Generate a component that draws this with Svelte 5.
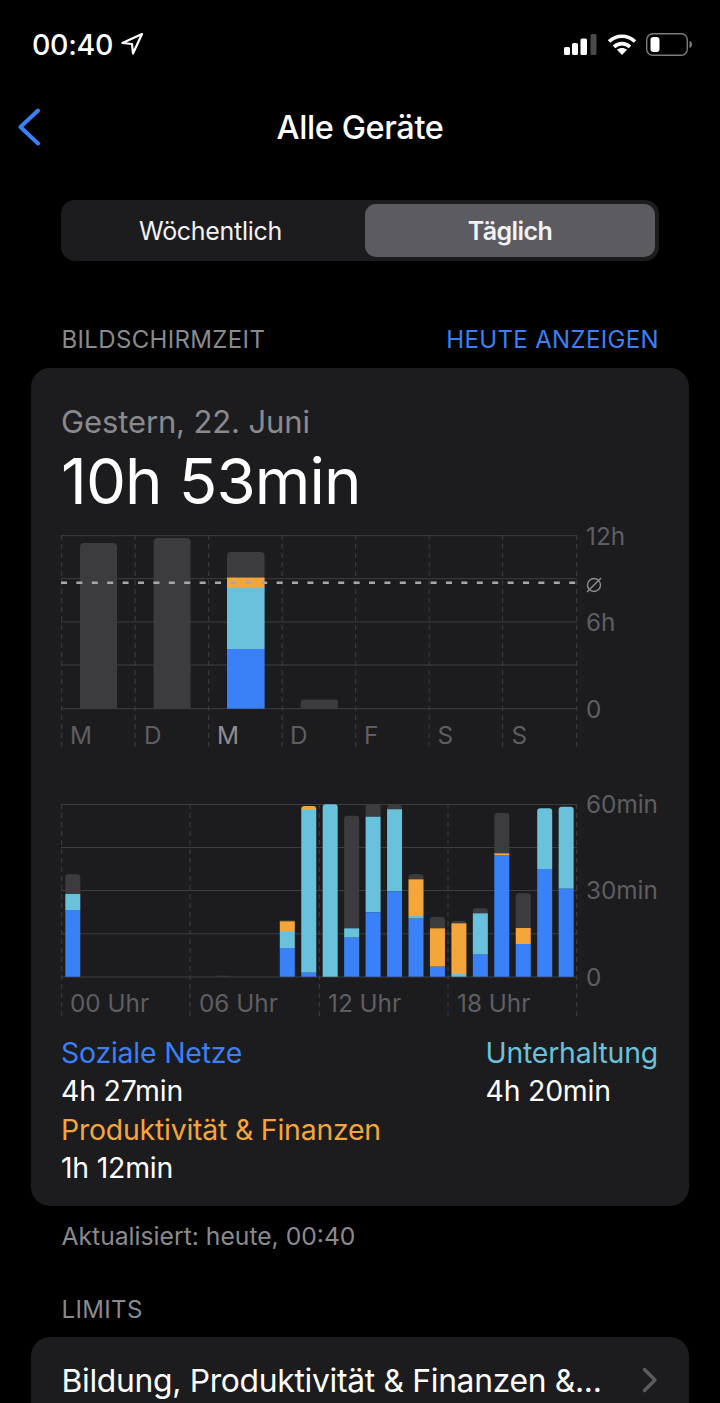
<script>
    const blue = '#3a80f6';
    const cyan = '#6ac1dc';
    const orange = '#f5a63b';
    const gray = '#3c3c3e';

    // grid of the weekly chart, chart coords start at x=61 page, y=535 page
    const weekV = [0.7, 74.2, 147.7, 221.2, 294.7, 368.2, 441.7, 515.7];
    const weekH = [0.7, 43.7, 87, 130, 173.7];
    const weekLabels = [
        { t: 'M', x: 9 },
        { t: 'D', x: 83 },
        { t: 'M', x: 156, on: true },
        { t: 'D', x: 229 },
        { t: 'F', x: 303 },
        { t: 'S', x: 376.5 },
        { t: 'S', x: 450.5 }
    ];
    const weekAxis = [
        { t: '12h', y: 1 },
        { t: '6h', y: 87 },
        { t: '0', y: 174 }
    ];

    const dayV = [0.7, 129, 258.3, 387, 515.7];
    const dayH = [0.5, 43.5, 86.5, 129.8, 173];
    const dayLabels = [
        { t: '00 Uhr', x: 9 },
        { t: '06 Uhr', x: 138 },
        { t: '12 Uhr', x: 267 },
        { t: '18 Uhr', x: 396 }
    ];
    const dayAxis = [
        { t: '60min', y: 0 },
        { t: '30min', y: 86 },
        { t: '0', y: 173 }
    ];

    // each bar: hour, then [colour, top y on the page], top segment first
    const dayBars = [
        [0, [gray, 874.3], [cyan, 894], [blue, 910]],
        [7, [gray, 975.7]],
        [10, [gray, 920.3], [orange, 921.3], [cyan, 932], [blue, 948]],
        [11, [orange, 806], [cyan, 810], [blue, 972.7]],
        [12, [cyan, 804.3]],
        [13, [gray, 815.7], [cyan, 928.3], [blue, 937.7]],
        [14, [gray, 804], [cyan, 816.7], [blue, 912.3]],
        [15, [gray, 805], [cyan, 809.3], [blue, 891.3]],
        [16, [gray, 874.3], [orange, 879.3], [cyan, 916], [blue, 918.7]],
        [17, [gray, 917], [orange, 928.3], [blue, 966.7]],
        [18, [gray, 921], [orange, 923.3], [cyan, 974]],
        [19, [gray, 908.3], [cyan, 913.3], [blue, 954.7]],
        [20, [gray, 813], [orange, 853.3], [blue, 855]],
        [21, [gray, 893.3], [orange, 928], [blue, 944]],
        [22, [cyan, 808.3], [blue, 869]],
        [23, [cyan, 806.7], [blue, 888.7]]
    ];

    const dayBottom = 976.7;
    const dayTop = 804;
    const barWidth = 15;

    function barX(hour) {
        return 4.3 + 21.45 * hour;
    }

    // square segment, but the topmost one gets rounded upper corners
    function segPath(x, y, h, first) {
        const r = first ? Math.min(3, h) : 0;
        const w = barWidth;
        return `M${x} ${y + h}V${y + r}a${r} ${r} 0 0 1 ${r} ${-r}H${x + w - r}a${r} ${r} 0 0 1 ${r} ${r}V${y + h}z`;
    }

    function segs(bar) {
        const list = bar.slice(1);
        const x = barX(bar[0]);
        return list.map((s, i) => {
            const end = i + 1 < list.length ? list[i + 1][1] : dayBottom;
            return { fill: s[0], d: segPath(x, s[1] - dayTop, end - s[1], i === 0) };
        });
    }
</script>

<main class="page">
    <header class="status">
        <div class="time">
            <span>00:40</span>
            <svg width="24" height="24" viewBox="0 0 24 24">
                <path d="M22 2 2.500 11l9.500 1 1 9.500z" fill="none" stroke="#fff" stroke-width="2.2" stroke-linejoin="round" />
            </svg>
        </div>
        <div class="status-icons">
            <svg class="signal" width="33" height="21" viewBox="0 0 33 21">
                <rect x="0" y="13" width="6" height="8" rx="1.5" fill="#fff" />
                <rect x="8" y="9" width="6" height="12" rx="1.5" fill="#fff" />
                <rect x="16.5" y="4.5" width="6.5" height="16.5" rx="1.5" fill="#fff" />
                <rect x="26.5" y="0" width="6" height="21" rx="1.5" fill="#4a4a4c" />
            </svg>
            <svg class="wifi" width="30" height="21" viewBox="0 0 30 21">
                <path d="M2 7.5C9.5.5 20.5.5 28 7.5" fill="none" stroke="#fff" stroke-width="3.6" />
                <path d="M7 12.8c4.8-4.3 11.2-4.3 16 0" fill="none" stroke="#fff" stroke-width="3.6" />
                <path d="M15 21l-5-5.2c2.9-2.4 7.1-2.4 10 0z" fill="#fff" />
            </svg>
            <svg class="battery" width="46" height="23" viewBox="0 0 46 23">
                <rect x="0.7" y="0.7" width="40.6" height="21.6" rx="6" fill="none" stroke="#7b7b7d" stroke-width="1.4" />
                <rect x="4.5" y="4" width="9" height="15" rx="3" fill="#fff" />
                <path d="M43.5 8c1.7.5 2.500 1.800 2.500 3.500s-.8 3-2.500 3.500z" fill="#7b7b7d" />
            </svg>
        </div>
    </header>

    <nav class="navbar">
        <svg class="back" width="24" height="38" viewBox="0 0 24 38">
            <path d="M21 2.5 3.5 19 21 35.5" fill="none" stroke="#3a80f6" stroke-width="4" stroke-linecap="round" stroke-linejoin="round" />
        </svg>
        <h1>Alle Geräte</h1>
    </nav>

    <div class="segmented">
        <div class="seg first">Wöchentlich</div>
        <div class="seg active">Täglich</div>
    </div>

    <div class="section-head">
        <span>BILDSCHIRMZEIT</span>
        <span class="link">HEUTE ANZEIGEN</span>
    </div>

    <section class="card">
        <div class="date">Gestern, 22. Juni</div>
        <div class="total">10h 53min</div>

        <svg class="chart week" width="598" height="212" viewBox="0 0 598 212">
            {#each weekH as y}
                <line x1="0" x2="516" y1={y} y2={y} class="grid" />
            {/each}
            {#each weekV as x}
                <line x1={x} x2={x} y1="0" y2="212" class="grid dashed" />
            {/each}

            <path d="M19 174V12a4 4 0 0 1 4-4h29a4 4 0 0 1 4 4v162z" fill={gray} />
            <path d="M92.6 174V7a4 4 0 0 1 4-4h29a4 4 0 0 1 4 4v167z" fill={gray} />
            <path d="M166 42.5V21a4 4 0 0 1 4-4h29.6a4 4 0 0 1 4 4v21.5z" fill={gray} />
            <rect x="166" y="42.5" width="37.6" height="10.5" fill={orange} />
            <rect x="166" y="53" width="37.6" height="61" fill={cyan} />
            <rect x="166" y="114" width="37.6" height="59.7" fill={blue} />
            <path d="M239.6 174v-6.5a3 3 0 0 1 3-3h31.4a3 3 0 0 1 3 3v6.5z" fill={gray} />

            <line x1="0" x2="516" y1="47.7" y2="47.7" class="avg" />

            {#each weekLabels as l}
                <text x={l.x} y="209" class="tick" class:on={l.on}>{l.t}</text>
            {/each}
            {#each weekAxis as a}
                <text x="525" y={a.y + 9} class="tick">{a.t}</text>
            {/each}
            <g fill="none" stroke="#8e8e90" stroke-width="1.4">
                <circle cx="533" cy="50" r="6.5" />
                <line x1="526" y1="57" x2="540" y2="43" />
            </g>
        </svg>

        <svg class="chart day" width="598" height="212" viewBox="0 0 598 212">
            {#each dayH as y}
                <line x1="0" x2="516" y1={y} y2={y} class="grid" />
            {/each}
            {#each dayV as x}
                <line x1={x} x2={x} y1="0" y2="212" class="grid dashed" />
            {/each}

            {#each dayBars as bar}
                <g>
                    {#each segs(bar) as s}
                        <path d={s.d} fill={s.fill} />
                    {/each}
                </g>
            {/each}

            {#each dayLabels as l}
                <text x={l.x} y="208" class="tick">{l.t}</text>
            {/each}
            {#each dayAxis as a}
                <text x="525" y={a.y + 9} class="tick">{a.t}</text>
            {/each}
        </svg>

        <div class="legend">
            <div class="legend-col">
                <div class="name soc">Soziale Netze</div>
                <div class="val">4h 27min</div>
                <div class="name prod">Produktivität &amp; Finanzen</div>
                <div class="val">1h 12min</div>
            </div>
            <div class="legend-col">
                <div class="name ent">Unterhaltung</div>
                <div class="val">4h 20min</div>
            </div>
        </div>
    </section>

    <div class="updated">Aktualisiert: heute, 00:40</div>

    <div class="section-head limits">LIMITS</div>

    <section class="card row">
        <span>Bildung, Produktivität &amp; Finanzen &amp;...</span>
        <svg width="16" height="26" viewBox="0 0 16 26">
            <path d="M2.5 2.5 13 13 2.5 23.5" fill="none" stroke="#5c5c5f" stroke-width="3.4" stroke-linecap="round" stroke-linejoin="round" />
        </svg>
    </section>
</main>

<style>
    :global(body) {
        margin: 0;
        background: #000;
    }

    .page {
        width: 720px;
        height: 1403px;
        overflow: hidden;
        background: #000;
        color: #fff;
        font-family: Inter, "Liberation Sans", sans-serif;
    }

    .status {
        display: flex;
        justify-content: space-between;
        align-items: center;
        height: 88px;
        padding: 0 28px 0 32px;
        box-sizing: border-box;
    }

    .time {
        display: flex;
        align-items: center;
        gap: 7px;
        font-size: 28.5px;
        font-weight: 500;
        letter-spacing: -0.3px;
    }

    .status-icons {
        display: flex;
        align-items: center;
        gap: 9.5px;
    }

    .navbar {
        display: flex;
        align-items: center;
        justify-content: center;
        position: relative;
        height: 78px;
    }

    .back {
        position: absolute;
        left: 17px;
        top: 20px;
    }

    h1 {
        margin: 0;
        font-size: 32.5px;
        font-weight: 500;
        letter-spacing: -0.4px;
    }

    .segmented {
        display: grid;
        grid-template-columns: 1fr 290px;
        gap: 4px;
        margin: 34px 61px 0;
        padding: 4px;
        height: 61px;
        box-sizing: border-box;
        border-radius: 14px;
        background: #1c1c1e;
    }

    .seg {
        display: flex;
        align-items: center;
        justify-content: center;
        font-size: 25px;
        font-weight: 400;
        letter-spacing: -0.3px;
        color: #f2f2f4;
    }

    .seg.first {
        padding-right: 5px;
    }

    .seg.active {
        background: #5c5c60;
        border-radius: 11px;
        font-weight: 600;
        letter-spacing: -0.6px;
    }

    .section-head {
        display: flex;
        justify-content: space-between;
        margin: 64px 61px 0 61.5px;
        height: 30px;
        line-height: 30px;
        font-size: 24px;
        letter-spacing: 0.35px;
        color: #8a8a8e;
    }

    .link {
        color: #3a80f6;
    }

    .card {
        margin: 13px 31px 0;
        border-radius: 19px;
        background: #1c1c1e;
    }

    section.card:not(.row) {
        padding: 34px 0 0 30px;
        height: 838px;
        box-sizing: border-box;
    }

    .date {
        height: 40px;
        line-height: 40px;
        font-size: 31px;
        letter-spacing: -0.12px;
        color: #8a8a8e;
    }

    .total {
        height: 76px;
        line-height: 76px;
        margin-top: 1px;
        font-size: 63.5px;
        font-weight: 400;
        letter-spacing: -0.9px;
    }

    .chart {
        display: block;
        overflow: visible;
    }

    .week {
        margin-top: 16px;
    }

    .day {
        margin-top: 57px;
    }

    .grid {
        stroke: #3e3e40;
        stroke-width: 1;
    }

    .dashed {
        stroke-dasharray: 5 4;
    }

    .avg {
        stroke: #a8a8aa;
        stroke-width: 2.5;
        stroke-dasharray: 6 9.4;
    }

    .tick {
        font-size: 24.3px;
        fill: #5e5e62;
    }

    .tick.on {
        fill: #8e8e92;
    }

    .legend {
        display: flex;
        justify-content: space-between;
        margin-top: 18px;
        padding-right: 31px;
        font-size: 28.4px;
        letter-spacing: -0.2px;
    }

    .name,
    .val {
        height: 38.3px;
        line-height: 38.3px;
    }

    .soc {
        color: #3a80f6;
    }

    .prod {
        color: #f5a63b;
    }

    .ent {
        color: #6ac1dc;
    }

    .updated {
        margin: 14px 61.5px 0;
        height: 32px;
        line-height: 32px;
        font-size: 24.7px;
        color: #8a8a8e;
    }

    .limits {
        margin-top: 43px;
    }

    .limits + .card {
        margin-top: 12px;
    }

    .row {
        display: flex;
        align-items: center;
        justify-content: space-between;
        height: 86px;
        padding: 0 31px 0 30.5px;
        font-size: 31.8px;
        letter-spacing: -0.3px;
    }
</style>
